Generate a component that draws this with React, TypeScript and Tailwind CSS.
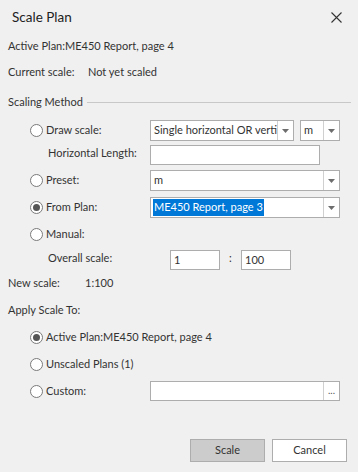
import React from "react";

const Radio = ({ checked = false }: { checked?: boolean }) => (
  <span className="w-[13px] h-[13px] rounded-full border border-[#7a7a7a] bg-white flex items-center justify-center shrink-0">
    {checked && <span className="w-[7px] h-[7px] rounded-full bg-[#555]" />}
  </span>
);

const Arrow = () => (
  <span className="w-[16px] h-full border-l border-[#d0d0d0] flex items-center justify-center shrink-0">
    <svg width="7" height="4" viewBox="0 0 7 4">
      <path d="M0 0h7L3.5 4z" fill="#6d6d6d" />
    </svg>
  </span>
);

const Combo = ({ text, w, selected = false }: { text: string; w: string; selected?: boolean }) => (
  <div className={`${w} h-[21px] bg-white border border-[#adadad] flex items-stretch`}>
    <div className="flex-1 flex items-center pl-[2px] overflow-hidden whitespace-nowrap">
      {selected ? <span className="bg-[#0078d7] text-white px-[1px]">{text}</span> : <span className="px-[1px]">{text}</span>}
    </div>
    <Arrow />
  </div>
);

export default function App() {
  return (
    <div className="w-[358px] h-[472px] bg-[#f0f0f0] text-[#333] text-[11px] overflow-hidden whitespace-nowrap" style={{ fontFamily: 'Lato, "Open Sans", sans-serif' }}>
      <div className="h-[34px] flex items-center justify-between pl-[12px] pr-[16px]">
        <span className="text-[13.5px] text-[#222]">Scale Plan</span>
        <svg width="11" height="11" viewBox="0 0 11 11">
          <path d="M0.5 0.5l10 10M10.5 0.5l-10 10" stroke="#333" strokeWidth="1.1" />
        </svg>
      </div>
      <div className="h-[24px] flex items-center pl-[8px]">Active Plan:ME450 Report, page 4</div>
      <div className="mt-[2px] h-[24px] flex items-center pl-[8px]">
        <span className="w-[80px]">Current scale:</span>
        <span>Not yet scaled</span>
      </div>
      <div className="mt-[7px] h-[22px] flex items-center pl-[8px] pr-[7px] gap-[4px]">
        <span>Scaling Method</span>
        <span className="flex-1 h-px bg-[#c8c8c8]" />
      </div>

      <div className="mt-[7px] h-[21px] flex items-center">
        <div className="w-[150px] flex items-center gap-[3px] pl-[30px]">
          <Radio />
          <span>Draw scale:</span>
        </div>
        <Combo text="Single horizontal OR verti" w="w-[144px]" />
        <div className="ml-[6px]">
          <Combo text="m" w="w-[40px]" />
        </div>
      </div>

      <div className="mt-[4px] h-[20px] flex items-center">
        <span className="w-[150px] pl-[48px] -mt-[3px]">Horizontal Length:</span>
        <div className="w-[170px] h-[20px] bg-white border border-[#adadad]" />
      </div>

      <div className="mt-[5px] h-[21px] flex items-center">
        <div className="w-[150px] flex items-center gap-[3px] pl-[30px]">
          <Radio />
          <span>Preset:</span>
        </div>
        <Combo text="m" w="w-[190px]" />
      </div>

      <div className="mt-[6px] h-[21px] flex items-center">
        <div className="w-[150px] flex items-center gap-[3px] pl-[30px]">
          <Radio checked />
          <span>From Plan:</span>
        </div>
        <Combo text="ME450 Report, page 3" w="w-[190px]" selected />
      </div>

      <div className="mt-[6px] h-[20px] flex items-center">
        <div className="w-[150px] flex items-center gap-[3px] pl-[30px]">
          <Radio />
          <span>Manual:</span>
        </div>
      </div>

      <div className="mt-[6px] h-[20px] flex items-center">
        <span className="w-[170px] pl-[48px] -mt-[3px]">Overall scale:</span>
        <div className="w-[50px] h-[20px] bg-white border border-[#adadad] flex items-center pl-[3px]">1</div>
        <span className="w-[21px] text-center -mt-[3px]">:</span>
        <div className="w-[50px] h-[20px] bg-white border border-[#adadad] flex items-center pl-[3px]">100</div>
      </div>

      <div className="mt-[3px] h-[20px] flex items-center pl-[8px]">
        <span className="w-[77px]">New scale:</span>
        <span>1:100</span>
      </div>

      <div className="mt-[7px] h-[20px] flex items-center pl-[8px]">Apply Scale To:</div>

      <div className="mt-[7px] h-[20px] flex items-center gap-[3px] pl-[30px]">
        <Radio checked />
        <span>Active Plan:ME450 Report, page 4</span>
      </div>
      <div className="mt-[7px] h-[20px] flex items-center gap-[3px] pl-[30px]">
        <Radio />
        <span>Unscaled Plans (1)</span>
      </div>
      <div className="mt-[7px] h-[20px] flex items-center">
        <div className="w-[150px] flex items-center gap-[3px] pl-[30px]">
          <Radio />
          <span>Custom:</span>
        </div>
        <div className="w-[190px] h-[20px] bg-white border border-[#adadad] flex items-stretch">
          <div className="flex-1" />
          <span className="w-[16px] border-l border-[#d0d0d0] flex items-center justify-center text-[10px] leading-none pb-[3px] text-[#555]">...</span>
        </div>
      </div>

      <div className="mt-[38px] flex justify-end gap-[7px] pr-[11px]">
        <button className="w-[75px] h-[23px] bg-[#cccccc] border border-[#adadad] text-[#333]">Scale</button>
        <button className="w-[75px] h-[23px] bg-white border border-[#adadad] text-[#333]">Cancel</button>
      </div>
    </div>
  );
}
